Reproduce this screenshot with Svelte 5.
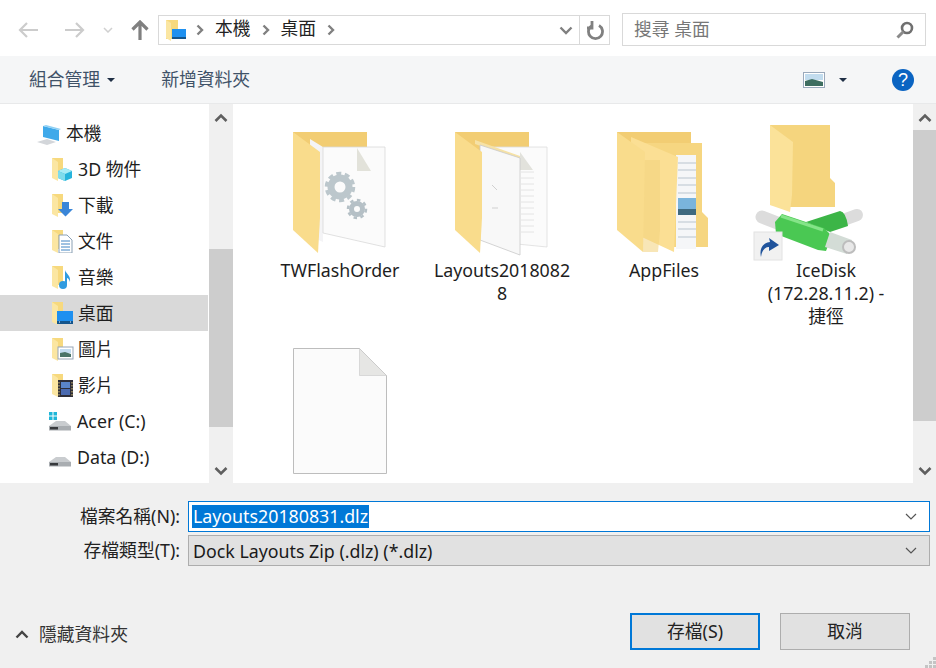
<script>
  const navItems = [
    { label: '3D 物件', icon: 'cube' },
    { label: '下載', icon: 'down' },
    { label: '文件', icon: 'doc' },
    { label: '音樂', icon: 'music' },
    { label: '桌面', icon: 'desk', selected: true },
    { label: '圖片', icon: 'pic' },
    { label: '影片', icon: 'film' }
  ];
</script>

{#snippet navFolder(icon)}
  <svg class="nav-icon" viewBox="0 0 24 24">
    <path d="M2 1h11v19H2z" fill="#f7d97e" />
    <path d="M2 1l6 4v19l-6-3z" fill="#fbe6a2" />
    {#if icon === 'cube'}
      <path d="M8 14l7-3 7 3v7l-7 3-7-3z" fill="#27b4dc" />
      <path d="M8 14l7-3 7 3-7 3z" fill="#a8ecf6" />
      <path d="M8 14l7 3v7l-7-3z" fill="#7fdcec" />
    {:else if icon === 'down'}
      <path d="M12 9h7v7h4l-7.500 7.500L8 16h4z" fill="#3a86d8" />
    {:else if icon === 'doc'}
      <path d="M9 6h8l5 5v13H9z" fill="#fff" stroke="#8aa0b4" />
      <path d="M11 12h9M11 15h9M11 18h9M11 21h9" stroke="#3f84c4" />
    {:else if icon === 'music'}
      <circle cx="13" cy="20" r="4" fill="#2f9be0" />
      <path d="M15 20V5c1 4 6 5 5 12-1-3-2-4-3-4v7z" fill="#2f9be0" />
    {:else if icon === 'desk'}
      <rect x="7" y="10" width="16" height="11" fill="#1e90f0" />
      <rect x="7" y="20" width="16" height="3" fill="#14558c" />
      <path d="M9 21h1M20 21h1" stroke="#fff" />
    {:else if icon === 'pic'}
      <rect x="8" y="10" width="15" height="12" fill="#fff" stroke="#97a6b6" />
      <path d="M10 12h11v4H10z" fill="#c3dcf0" />
      <path d="M10 20v-4l5-1 6 2v3z" fill="#4a7468" />
    {:else if icon === 'film'}
      <rect x="8" y="7" width="15" height="17" fill="#2e2e38" />
      <rect x="11" y="9" width="9" height="6" fill="#5a84c8" />
      <rect x="11" y="16" width="9" height="6" fill="#4a6ab0" />
      <path d="M9 9v14M22 9v14" stroke="#d8c070" stroke-dasharray="1.500 1.500" />
    {/if}
  </svg>
{/snippet}

{#snippet drive(windows)}
  <svg class="drive-icon" viewBox="0 0 24 24">
    {#if windows}
      <path d="M1 3h3.500v3.500H1zM5.500 3H9v3.500H5.500zM1 7.500h3.500V11H1zM5.500 7.500H9V11H5.500z" fill="#1fb6d8" />
    {/if}
    <path d="M1 17l7-5h9l6 5v4H1z" fill="#c9cccf" />
    <path d="M1 17h22v4.500H1z" fill="#a9adb1" />
    <path d="M2 18h8v2.500H2z" fill="#37393c" />
  </svg>
{/snippet}

{#snippet chevron(up)}
  <svg class="bar-chevron" viewBox="0 0 14 10">
    <path d={up ? 'M1.500 8L7 2.500 12.500 8' : 'M1.500 2L7 7.500 12.500 2'} fill="none" stroke="#5f5f5f" stroke-width="2.600" />
  </svg>
{/snippet}

<div class="dialog">
  <div class="topbar">
    <div class="nav-buttons">
      <svg class="arrow" viewBox="0 0 20 16"><path d="M20 8H2M9 1L2 8l7 7" fill="none" stroke="#ccc" stroke-width="2.200" /></svg>
      <svg class="arrow arrow-fwd" viewBox="0 0 20 16"><path d="M0 8h18M11 1l7 7-7 7" fill="none" stroke="#ccc" stroke-width="2.200" /></svg>
      <svg class="mini-down" viewBox="0 0 10 6"><path d="M1 1l4 4 4-4" fill="none" stroke="#d0d0d0" stroke-width="1.500" /></svg>
      <svg class="arrow-up" viewBox="0 0 18 20"><path d="M9 20V3M1.500 9.500L9 2l7.500 7.500" fill="none" stroke="#808080" stroke-width="3.200" /></svg>
    </div>
    <div class="address">
      <svg class="addr-icon" viewBox="0 0 22 24">
        <path d="M1 2h12v19H1z" fill="#f7d97e" />
        <path d="M1 2l5 3v18l-5-3z" fill="#fbe6a2" />
        <rect x="7" y="11" width="14" height="10" fill="#1e90f0" />
        <rect x="7" y="19" width="14" height="2" fill="#14558c" />
      </svg>
      <svg class="crumb" viewBox="0 0 8 12"><path d="M1.500 1.500L6 6l-4.500 4.500" fill="none" stroke="#808080" stroke-width="2.400" /></svg>
      <span class="crumb-text">本機</span>
      <svg class="crumb" viewBox="0 0 8 12"><path d="M1.500 1.500L6 6l-4.500 4.500" fill="none" stroke="#808080" stroke-width="2.400" /></svg>
      <span class="crumb-text">桌面</span>
      <svg class="crumb" viewBox="0 0 8 12"><path d="M1.500 1.500L6 6l-4.500 4.500" fill="none" stroke="#808080" stroke-width="2.400" /></svg>
      <svg class="addr-down" viewBox="0 0 14 9"><path d="M1.500 1.500L7 7l5.500-5.500" fill="none" stroke="#808080" stroke-width="2.400" /></svg>
      <div class="refresh">
        <svg viewBox="0 0 18 20"><path d="M5 4.500A7 7 0 1 0 12 4.500M5 0v7H0" transform="translate(1 1)" fill="none" stroke="#808080" stroke-width="2.800" /></svg>
      </div>
    </div>
    <div class="search">
      <span class="lift">搜尋 桌面</span>
      <svg viewBox="0 0 18 18"><circle cx="11" cy="7" r="5" fill="none" stroke="#707070" stroke-width="2.600" /><path d="M7.500 10.500L1.500 16.500" stroke="#8a8a8a" stroke-width="3" /></svg>
    </div>
  </div>

  <div class="commandbar">
    <span class="cmd lift">組合管理</span>
    <span class="caret"></span>
    <span class="cmd cmd-new lift">新增資料夾</span>
    <svg class="view-icon" viewBox="0 0 22 16">
      <rect x=".5" y=".5" width="21" height="15" fill="#fff" stroke="#9aa9bb" />
      <rect x="2" y="2" width="18" height="6" fill="#c2dcee" />
      <path d="M2 9l7-2 11 3v4H2z" fill="#3e6e60" />
    </svg>
    <span class="caret caret-view"></span>
    <span class="help">?</span>
  </div>

  <div class="body">
    <div class="tree">
      <div class="row row-pc">
        <svg class="pc-icon" viewBox="0 0 24 22">
          <path d="M6 2l16 4v11L6 13z" fill="#3fa9ea" />
          <path d="M6 2l3-1 15 4-2 1z" fill="#8fd0f4" />
          <path d="M0 18l10-3 9 3-9 3z" fill="#d3d6da" />
        </svg>
        <span class="lift">本機</span>
      </div>
      {#each navItems as item}
        <div class="row" class:selected={item.selected}>
          {@render navFolder(item.icon)}
          <span class="lift">{item.label}</span>
        </div>
      {/each}
      <div class="row row-drive">{@render drive(true)}<span>Acer (C:)</span></div>
      <div class="row row-drive">{@render drive(false)}<span>Data (D:)</span></div>
    </div>

    <div class="scrollbar scrollbar-tree">
      {@render chevron(true)}
      <div class="track"><div class="thumb"></div></div>
      {@render chevron(false)}
    </div>

    <div class="files">
      <div class="item">
        <svg class="big" viewBox="290 123 100 130">
          <path d="M293 132h74v30h-74z" fill="#f2cd73" />
          <path d="M310 139l13 8v95l-13-6z" fill="#f4f4f6" />
          <path d="M323 147h62v100l-62-14z" fill="#fbfbfb" stroke="#d9d9d9" stroke-width=".8" />
          <path d="M357 148v23h14z" fill="#e2e2da" />
          <circle cx="340" cy="187" r="9" fill="none" stroke="#bcc7cc" stroke-width="7" />
          <circle cx="340" cy="187" r="13.500" fill="none" stroke="#bcc7cc" stroke-width="3.500" stroke-dasharray="5 3.500" />
          <circle cx="357" cy="209" r="5.500" fill="none" stroke="#b5c0c6" stroke-width="5" />
          <circle cx="357" cy="209" r="9" fill="none" stroke="#b5c0c6" stroke-width="2.500" stroke-dasharray="3.500 3.500" />
          <path d="M293 132l27 20v66l-2 35-25-23z" fill="#f9dc8c" />
        </svg>
        <div class="name">TWFlashOrder</div>
      </div>

      <div class="item">
        <svg class="big" viewBox="452 123 100 130">
          <path d="M455 132h74v30h-74z" fill="#f2cd73" />
          <path d="M490 147h57v100l-30-3z" fill="#fbfbfb" stroke="#ddd" stroke-width=".8" />
          <path d="M520 152v18h13z" fill="#e2e2dc" />
          <path d="M521 172h13M521 178h13M521 184h13M521 190h13M521 196h13M521 202h13M521 208h13M521 214h13M521 220h13M521 226h13M521 232h13" stroke="#e4e4e4" />
          <path d="M475 140l45 16v4l-45-16z" fill="#f6e2a6" />
          <path d="M480 145l40 13v97l-40-15z" fill="#f8f8f8" stroke="#c9c9c9" stroke-width=".8" />
          <path d="M492 185l5 5M492 208h6" stroke="#d0d0d0" />
          <path d="M455 132l27 20v66l-2 35-25-23z" fill="#f9dc8c" />
        </svg>
        <div class="name">Layouts20180828</div>
      </div>

      <div class="item">
        <svg class="big" viewBox="614 123 100 130">
          <path d="M617 132h74v14h-74z" fill="#f2cd73" />
          <path d="M632 143h70v69l6 6v29h-35z" fill="#f6d681" />
          <path d="M676 155h20v94h-20z" fill="#f5f6f8" />
          <path d="M678 163h18M678 170h18M678 178h18M678 185h18M678 193h18M678 222h18M678 229h18M678 237h18" stroke="#b9c4ce" />
          <rect x="678" y="198" width="18" height="17" fill="#7ab4dc" />
          <rect x="678" y="209" width="18" height="6" fill="#3f6a80" />
          <path d="M631 137l47 20-4 95-43-20z" fill="#fbdf94" />
          <path d="M643 160h17v70l-2 22h-15z" fill="#f3d27c" opacity=".55" />
          <path d="M617 132l28 20-2 100-26-22z" fill="#f9dc8c" />
        </svg>
        <div class="name">AppFiles</div>
      </div>

      <div class="item">
        <svg class="big" viewBox="776 123 100 130">
          <path d="M770 125h60v53l5 5v24h-45l-20-2z" fill="#f5d57e" />
          <path d="M770 125l23 17-1 53-2 17-20-7z" fill="#fbe299" />
          <path d="M762 217l18 7" stroke="#dcdcdc" stroke-width="13" stroke-linecap="round" />
          <path d="M846 219l11-4" stroke="#dcdcdc" stroke-width="12" stroke-linecap="round" />
          <path d="M806 222l34-11q6 1 8 15l-18 6z" fill="#3cb547" />
          <path d="M775 222l7-8 42 14 8 8-6 15-8-1-42-16z" fill="#4ac853" />
          <path d="M781 216l42 14" stroke="#84e488" stroke-width="3" />
          <path d="M830 232l22 8-5 14-22-7z" fill="#d3dcd6" />
          <circle cx="849" cy="247" r="6" fill="#e8e8e8" stroke="#bdbdbd" stroke-width="2" />
          <rect x="754" y="232" width="28" height="28" fill="#f1f1f1" stroke="#e2e2e2" />
          <path d="M761 257c-2-9 2-14 9-15l-1-4 10 7-10 6v-4c-4 0-7 3-8 10z" fill="#20549c" />
        </svg>
        <div class="name name-multi">IceDisk<br />(172.28.11.2) -<br />捷徑</div>
      </div>

      <div class="item item-file">
        <svg class="big" viewBox="290 346 100 130">
          <path d="M293.500 348.500h66l27 27v98h-93z" fill="#fbfbfb" stroke="#bdbdbd" />
          <path d="M359.500 348.500v27h27z" fill="#e6e6e4" stroke="#c8c8c8" stroke-width=".6" />
        </svg>
      </div>
    </div>

    <div class="scrollbar scrollbar-files">
      {@render chevron(true)}
      <div class="track"><div class="thumb"></div></div>
      {@render chevron(false)}
    </div>
  </div>

  <div class="footer">
    <div class="field">
      <span class="field-label lift">檔案名稱(N):</span>
      <div class="input input-name">
        <span class="sel">Layouts20180831.dlz</span>
        <svg viewBox="0 0 12 7"><path d="M1 1l5 5 5-5" fill="none" stroke="#555" stroke-width="1.200" /></svg>
      </div>
    </div>
    <div class="field">
      <span class="field-label lift">存檔類型(T):</span>
      <div class="input input-type">
        <span class="type-text">Dock Layouts Zip (.dlz) (*.dlz)</span>
        <svg viewBox="0 0 12 7"><path d="M1 1l5 5 5-5" fill="none" stroke="#555" stroke-width="1.200" /></svg>
      </div>
    </div>
    <div class="actions">
      <div class="hide">
        <svg viewBox="0 0 14 9"><path d="M1.500 7.500L7 2l5.500 5.500" fill="none" stroke="#444" stroke-width="2.400" /></svg>
        <span class="lift">隱藏資料夾</span>
      </div>
      <div class="btn btn-primary"><span class="lift">存檔(S)</span></div>
      <div class="btn"><span class="lift">取消</span></div>
    </div>
    <svg class="grip" viewBox="0 0 12 12">
      <path d="M9 1h3v3H9zM5 5h3v3H5zM9 5h3v3H9zM1 9h3v3H1zM5 9h3v3H5zM9 9h3v3H9z" fill="#c4c4c4" />
    </svg>
  </div>
</div>

<style>
  :global(body) {
    margin: 0;
    background: #fff;
  }

  .dialog {
    width: 936px;
    height: 668px;
    display: flex;
    flex-direction: column;
    overflow: hidden;
    font-family: "Noto Sans", "Noto Sans CJK TC", sans-serif;
    font-size: 17.800px;
    color: #1a1a1a;
  }

  svg {
    display: block;
    flex: none;
  }

  /* le texte CJK tombe un peu bas dans les rangées centrées */
  .lift {
    margin-bottom: 3px;
  }

  /* barre du haut */
  .topbar {
    height: 56px;
    flex: none;
    display: flex;
    align-items: center;
    padding: 0 10px 0 18px;
    box-sizing: border-box;
    background: #fff;
  }

  .nav-buttons {
    display: flex;
    align-items: center;
    width: 140px;
    margin-top: 4px;
  }

  .arrow {
    width: 20px;
    height: 16px;
  }

  .arrow-fwd {
    margin-left: 27px;
  }

  .mini-down {
    width: 10px;
    height: 6px;
    margin-left: 18px;
  }

  .arrow-up {
    width: 18px;
    height: 20px;
    margin-left: 18px;
  }

  .address {
    width: 452px;
    height: 30px;
    box-sizing: border-box;
    border: 1px solid #d9d9d9;
    display: flex;
    align-items: center;
    padding-left: 6px;
    margin-top: 4px;
  }

  .addr-icon {
    width: 22px;
    height: 24px;
  }

  .crumb {
    width: 8px;
    height: 12px;
    margin: 0 0 0 9px;
  }

  .crumb-text {
    margin: 0 2px 5px 11px;
    line-height: 20px;
    color: #222;
  }

  .addr-down {
    width: 14px;
    height: 9px;
    margin-left: auto;
    margin-right: 6px;
  }

  .refresh {
    width: 29px;
    height: 28px;
    border-left: 1px solid #d9d9d9;
    display: flex;
    align-items: center;
    justify-content: center;
  }

  .refresh svg {
    width: 18px;
    height: 20px;
  }

  .search {
    width: 304px;
    height: 33px;
    margin-left: 12px;
    margin-top: 3px;
    box-sizing: border-box;
    border: 1px solid #d9d9d9;
    display: flex;
    align-items: center;
    justify-content: space-between;
    padding: 0 11px;
    color: #777;
  }

  .search svg {
    width: 18px;
    height: 18px;
  }

  /* barre de commandes */
  .commandbar {
    height: 48px;
    flex: none;
    box-sizing: border-box;
    border-bottom: 1px solid #e8e9ea;
    background: #f5f6f7;
    display: flex;
    align-items: center;
    padding: 0 22px 0 29px;
  }

  .cmd {
    color: #3f5268;
    font-size: 17.800px;
  }

  .cmd-new {
    margin-left: 46px;
  }

  .caret {
    width: 0;
    height: 0;
    margin-left: 7px;
    border: 4px solid transparent;
    border-top: 4px solid #1f2f45;
    border-bottom: 0;
  }

  .view-icon {
    width: 22px;
    height: 16px;
    margin-left: auto;
  }

  .caret-view {
    margin-left: 14px;
  }

  .help {
    width: 22px;
    height: 22px;
    margin-left: 45px;
    border-radius: 50%;
    background: #0a64c2;
    color: #fff;
    font-family: "Liberation Sans", sans-serif;
    font-size: 18px;
    line-height: 22px;
    text-align: center;
  }

  /* panneaux */
  .body {
    height: 379px;
    flex: none;
    display: flex;
    background: #fff;
  }

  .tree {
    width: 208px;
    flex: none;
    padding-top: 11px;
    box-sizing: border-box;
  }

  .row {
    height: 36px;
    display: flex;
    align-items: center;
    padding-left: 50px;
    color: #1e1e1e;
  }

  .row span {
    margin-left: 4px;
  }

  .selected {
    background: #d9d9d9;
  }

  .row-pc {
    padding-left: 37px;
  }

  .row-pc span {
    margin-left: 5px;
  }

  .row-drive {
    padding-left: 48px;
  }

  .row-drive span {
    margin-left: 5px;
  }

  .nav-icon,
  .drive-icon {
    width: 24px;
    height: 24px;
  }

  .pc-icon {
    width: 24px;
    height: 22px;
    margin-top: 4px;
  }

  .scrollbar {
    flex: none;
    background: #f0f0f0;
    display: flex;
    flex-direction: column;
    align-items: center;
  }

  .bar-chevron {
    width: 14px;
    height: 10px;
    margin: 9px 0 7px;
  }

  .track {
    flex: 1;
    width: 100%;
    display: flex;
    flex-direction: column;
  }

  .thumb {
    background: #cdcdcd;
  }

  .scrollbar-tree {
    width: 24px;
    margin-left: 1px;
  }

  .scrollbar-tree .thumb {
    height: 178px;
    margin-top: 119px;
  }

  .scrollbar-files {
    width: 23px;
  }

  .scrollbar-files .thumb {
    height: 291px;
  }

  .files {
    flex: 1;
    display: grid;
    grid-template-columns: repeat(4, 162px);
    grid-auto-rows: min-content;
    padding: 19px 0 0 26px;
    overflow: hidden;
    align-content: start;
  }

  .item {
    display: flex;
    flex-direction: column;
    align-items: center;
    height: 223px;
  }

  .item-file {
    height: 130px;
  }

  .big {
    width: 100px;
    height: 130px;
    overflow: visible;
  }

  .name {
    width: 140px;
    margin-top: 6px;
    text-align: center;
    line-height: 23px;
    overflow-wrap: anywhere;
    color: #1e1e1e;
  }

  /* pied */
  .footer {
    flex: 1;
    position: relative;
    background: #f0f0f0;
    padding-top: 18px;
    box-sizing: border-box;
  }

  .field {
    display: flex;
    align-items: center;
    height: 31px;
    margin-bottom: 3px;
  }

  .field-label {
    width: 180px;
    text-align: right;
    color: #222;
  }

  .input {
    width: 742px;
    height: 31px;
    margin-left: 8px;
    box-sizing: border-box;
    display: flex;
    align-items: center;
    justify-content: space-between;
    padding: 0 12px 0 3px;
  }

  .input svg {
    width: 12px;
    height: 7px;
  }

  .input-name {
    background: #fff;
    border: 1px solid #0078d7;
  }

  .input-type {
    background: #e1e1e1;
    border: 1px solid #adadad;
  }

  .sel {
    background: #0078d7;
    color: #fff;
    line-height: 23px;
    padding: 0 1px;
  }

  .type-text {
    margin-left: 1px;
  }

  .actions {
    display: flex;
    align-items: center;
    margin-top: 47px;
    padding: 0 26px 0 15px;
  }

  .hide {
    display: flex;
    align-items: center;
    margin-right: auto;
    margin-top: 5px;
    color: #333;
  }

  .hide svg {
    width: 14px;
    height: 9px;
    margin-right: 10px;
  }

  .btn {
    width: 130px;
    height: 37px;
    box-sizing: border-box;
    background: #e1e1e1;
    border: 1px solid #adadad;
    display: flex;
    align-items: center;
    justify-content: center;
    margin-left: 20px;
    color: #222;
  }

  .btn-primary {
    border: 2px solid #0078d7;
  }

  .grip {
    position: absolute;
    right: 0;
    bottom: 0;
    width: 12px;
    height: 12px;
  }
</style>
